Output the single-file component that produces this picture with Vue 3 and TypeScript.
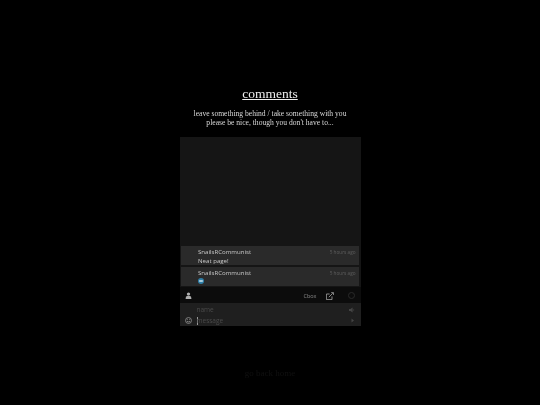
<script setup lang="ts">
interface Msg { name: string; time: string; text?: string; emoji?: boolean }
const messages: Msg[] = [
  { name: 'SnailsRCommunist', time: '5 hours ago', text: 'Neat page!' },
  { name: 'SnailsRCommunist', time: '5 hours ago', emoji: true },
]
</script>

<template>
  <main class="page">
    <h1 class="title">comments</h1>
    <p class="intro">leave something behind / take something with you<br />please be nice, though you don't have to...</p>
    <section class="box">
      <div class="feed">
        <article v-for="(m, i) in messages" :key="i" class="msg">
          <div class="msg-head">
            <span class="msg-name">{{ m.name }}</span>
            <span class="msg-time">{{ m.time }}</span>
          </div>
          <div class="msg-body">
            <span v-if="m.text">{{ m.text }}</span>
            <svg v-else class="emoji" viewBox="0 0 10 10" width="6" height="6">
              <circle cx="5" cy="5" r="5" fill="#2f7fa8" />
              <rect x="2" y="3.5" width="6" height="3" fill="#b5d4e2" />
            </svg>
          </div>
        </article>
      </div>
      <div class="bar">
        <svg class="user" viewBox="0 0 10 10" width="7" height="7">
          <circle cx="5" cy="3" r="2.4" fill="#b0b0b0" />
          <path d="M.8 10 1.4 6.6 3.4 5.6h3.2l2 1 .6 3.400z" fill="#b0b0b0" />
        </svg>
        <span class="brand">Cbox</span>
        <svg class="ext" viewBox="0 0 10 10" width="8" height="8" fill="none" stroke="#a8a8a8" stroke-width="1">
          <path d="M7.500 5.500v4H.5V2.500H4.500" />
          <path d="M3.500 6.500 8.500 1.500M6.500 .8h3v3" />
        </svg>
        <span class="ring"></span>
      </div>
      <div class="form">
        <div class="row">
          <span class="slot"></span>
          <span class="ph name">name</span>
          <svg class="end-icon" viewBox="0 0 10 10" width="6" height="6">
            <path d="M0 3.500h2.500L6 1v8L2.500 6.500H0z" fill="#444" />
            <path d="M7.500 3.500q1 1.500 0 3" stroke="#444" fill="none" />
          </svg>
        </div>
        <div class="row">
          <span class="slot">
            <svg viewBox="0 0 10 10" width="7" height="7" fill="none" stroke="#909090" stroke-width="1.200">
              <circle cx="5" cy="5" r="4.200" />
              <path d="M2.800 6q2.200 2 4.400 0M3 3.500h1M6 3.500h1" />
            </svg>
          </span>
          <span class="cursor"></span>
          <span class="ph msg-ph">message</span>
          <svg class="end-icon" viewBox="0 0 10 10" width="5" height="5">
            <path d="M3 1l5 4-5 4z" fill="#444" />
          </svg>
        </div>
      </div>
    </section>
    <a class="home">go back home</a>
  </main>
</template>

<style scoped>
.page {
  display: flex;
  flex-direction: column;
  align-items: center;
  height: 405px;
  padding-top: 85px;
  box-sizing: border-box;
  background: #000;
  font-family: "Liberation Serif", serif;
  overflow: hidden;
  filter: blur(0.4px);
}
.title {
  margin: 0;
  font-size: 13.500px;
  line-height: 17px;
  font-weight: 400;
  color: #eee;
  text-decoration: underline;
}
.intro {
  margin: 7px 0 0;
  font-size: 7.600px;
  line-height: 9px;
  text-align: center;
  color: #d8d8d8;
}
.box {
  width: 181px;
  height: 189px;
  margin-top: 10px;
  display: flex;
  flex-direction: column;
  background: #151515;
  font-family: "Open Sans", sans-serif;
}
.feed {
  flex: 1;
  display: flex;
  flex-direction: column;
  justify-content: flex-end;
  gap: 2px;
  padding: 0 2px 1px 1px;
}
.msg {
  height: 19px;
  box-sizing: border-box;
  padding: 1px 3px 0 17.500px;
  background: #2a2a2a;
}
.msg-head {
  display: flex;
  justify-content: space-between;
  align-items: center;
  height: 9px;
}
.msg-name { font-size: 6.100px; color: #c8c8c8; }
.msg-time { font-size: 4.700px; color: #5e5e5e; }
.msg-body {
  height: 8px;
  display: flex;
  align-items: center;
  font-size: 6.100px;
  color: #c8c8c8;
}
.bar {
  height: 16px;
  display: flex;
  align-items: center;
  padding: 1px 6px 0 5px;
  box-sizing: border-box;
  background: #0c0c0c;
}
.brand { margin-left: auto; font-size: 5.500px; color: #8a8a8a; }
.ext { margin-left: 9px; }
.ring {
  width: 5px;
  height: 5px;
  margin-left: 14px;
  border: 1px solid #2a2a2a;
  border-radius: 50%;
}
.form { height: 23px; padding-top: 1px; box-sizing: border-box; background: #1f1f1f; }
.row {
  height: 11px;
  display: flex;
  align-items: center;
  padding-right: 6px;
}
.slot { width: 17px; display: flex; justify-content: center; }
.ph { font-size: 6.500px; color: #4a4a4a; }
.msg-ph { margin-left: -1px; }
.cursor { width: 1px; height: 8px; background: #999; }
.end-icon { margin-left: auto; }
.home {
  margin-top: 42px;
  font-size: 9px;
  color: #101010;
}
</style>
